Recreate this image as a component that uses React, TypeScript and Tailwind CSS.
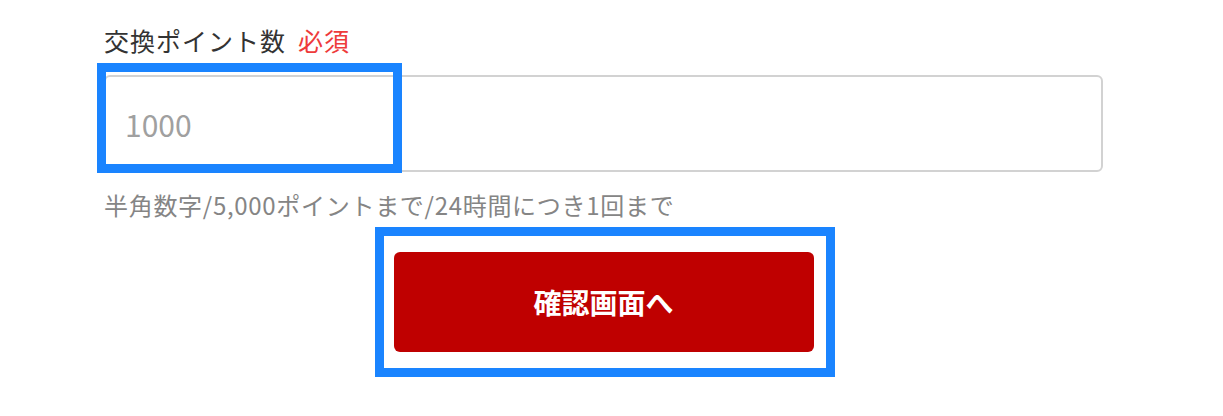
const font = "font-['Noto_Sans_CJK_JP','Noto_Sans',sans-serif]";

const App = () => {
    return (
        <div className={`relative w-[1223px] h-[416px] bg-white ${font}`}>
            <div className="w-[999px] ml-[104px] pt-[22px] flex flex-col">
                <div className="flex items-center leading-[36px] text-[25px] tracking-[1px] text-[#333333]">
                    <span>交換ポイント数</span>
                    <span className="ml-[12px] text-[#ee3b3b]">必須</span>
                </div>
                <input
                    type="text"
                    placeholder="1000"
                    className="mt-[17px] h-[97px] w-full rounded-[6px] border-2 border-[#d2d2d2] pl-[19px] text-[30px] text-[#333333] placeholder:text-[#a0a0a0] outline-none"
                />
                <p className="mt-[17px] leading-[32px] text-[24px] tracking-[0.7px] text-[#858585]">
                    半角数字/5,000ポイントまで/24時間につき1回まで
                </p>
                <div className="flex justify-center mt-[31px]">
                    <button className="w-[420px] h-[100px] rounded-[6px] bg-[#bf0000] text-white text-[28px] font-bold">
                        確認画面へ
                    </button>
                </div>
            </div>
            {/* highlight overlays */}
            <div className="absolute left-[97px] top-[63px] w-[305px] h-[110px] border-[9px] border-[#1a84ff]" />
            <div className="absolute left-[375px] top-[227px] w-[460px] h-[150px] border-[9px] border-[#1a84ff]" />
        </div>
    );
};

export default App;
